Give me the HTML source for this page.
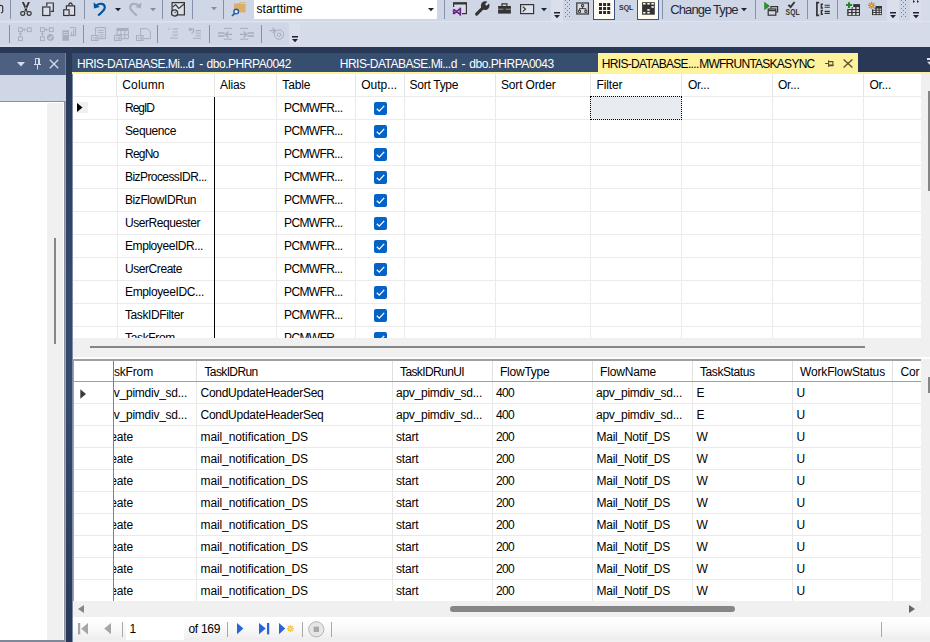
<!DOCTYPE html>
<html><head><meta charset="utf-8"><title>Query Designer</title>
<style>
html,body{margin:0;padding:0;}
body{width:930px;height:642px;overflow:hidden;background:#D6DBE9;position:relative;font-family:"Liberation Sans",sans-serif;}
#r{position:absolute;left:0;top:0;width:930px;height:642px;overflow:hidden;}
#r div,#r span,#r svg{position:absolute;}
.t{white-space:nowrap;line-height:16px;height:16px;}
.clip{overflow:hidden;}
</style></head><body><div id="r">
<div style="left:0px;top:0px;width:930px;height:47px;background:#D6DBE9;"></div>
<div style="left:0px;top:0px;width:551px;height:21px;background:#CFD6E5;"></div>
<div style="left:551px;top:0px;width:12px;height:21px;background:#DBDFEC;"></div>
<div style="left:563px;top:0px;width:324px;height:21px;background:#CFD6E5;"></div>
<div style="left:887px;top:0px;width:12px;height:21px;background:#DBDFEC;"></div>
<div style="left:899px;top:0px;width:11px;height:21px;background:#CFD6E5;"></div>
<div style="left:910px;top:0px;width:11px;height:21px;background:#DBDFEC;"></div>
<div style="left:0px;top:23px;width:289px;height:22px;background:#CFD6E5;"></div>
<div style="left:0px;top:21px;width:930px;height:1px;background:#DFE3EE;"></div>
<div style="left:289px;top:23px;width:11px;height:22px;background:#DBDFEC;"></div>
<div style="left:0px;top:47px;width:930px;height:27px;background:#293955;"></div>
<div style="left:72px;top:53px;width:526px;height:19px;background:#364E6F;"></div>
<div style="left:598px;top:53px;width:260px;height:19px;background:#FFF29D;"></div>
<div style="left:72px;top:72px;width:858px;height:2px;background:#FFF29D;"></div>
<div style="left:0px;top:53px;width:66px;height:22px;background:#4D6082;"></div>
<div style="left:65px;top:53px;width:1px;height:22px;background:#6F80A3;"></div>
<div style="left:0px;top:75px;width:66px;height:26px;background:#CFD6E5;"></div>
<div style="left:0px;top:101px;width:65px;height:541px;background:#FFFFFF;"></div>
<div style="left:0px;top:101px;width:65px;height:1px;background:#8A90A0;"></div>
<div style="left:47px;top:103px;width:16px;height:537px;background:#F0F0F0;"></div>
<div style="left:54px;top:238px;width:2px;height:106px;background:#868686;"></div>
<div style="left:64px;top:101px;width:1px;height:541px;background:#8A90A0;"></div>
<div style="left:65px;top:101px;width:1px;height:541px;background:#97A3C2;"></div>
<div style="left:0px;top:640px;width:65px;height:2px;background:#7F8899;"></div>
<div style="left:66px;top:47px;width:6px;height:595px;background:linear-gradient(#293955 0%,#35496A 40%,#35496A 60%,#293955 100%)"></div>
<div style="left:72px;top:74px;width:1px;height:568px;background:#7C8DB0;"></div>
<div style="left:73px;top:74px;width:848px;height:264px;background:#FFFFFF;"></div>
<div style="left:921px;top:74px;width:9px;height:264px;background:#F0F0F0;"></div>
<div style="left:928px;top:91px;width:2px;height:100px;background:#868686;"></div>
<div style="left:73px;top:96px;width:848px;height:1px;background:#EBEBEB;"></div>
<div style="left:73px;top:119px;width:848px;height:1px;background:#EBEBEB;"></div>
<div style="left:73px;top:142px;width:848px;height:1px;background:#EBEBEB;"></div>
<div style="left:73px;top:165px;width:848px;height:1px;background:#EBEBEB;"></div>
<div style="left:73px;top:188px;width:848px;height:1px;background:#EBEBEB;"></div>
<div style="left:73px;top:211px;width:848px;height:1px;background:#EBEBEB;"></div>
<div style="left:73px;top:234px;width:848px;height:1px;background:#EBEBEB;"></div>
<div style="left:73px;top:257px;width:848px;height:1px;background:#EBEBEB;"></div>
<div style="left:73px;top:280px;width:848px;height:1px;background:#EBEBEB;"></div>
<div style="left:73px;top:303px;width:848px;height:1px;background:#EBEBEB;"></div>
<div style="left:73px;top:326px;width:848px;height:1px;background:#EBEBEB;"></div>
<div style="left:116px;top:74px;width:1px;height:22px;background:#E4E4E4;"></div>
<div style="left:117px;top:97px;width:1px;height:241px;background:#EBEBEB;"></div>
<div style="left:214px;top:74px;width:1px;height:22px;background:#E4E4E4;"></div>
<div style="left:214px;top:97px;width:1px;height:241px;background:#EBEBEB;"></div>
<div style="left:276px;top:74px;width:1px;height:22px;background:#E4E4E4;"></div>
<div style="left:276px;top:97px;width:1px;height:241px;background:#EBEBEB;"></div>
<div style="left:355px;top:74px;width:1px;height:22px;background:#E4E4E4;"></div>
<div style="left:355px;top:97px;width:1px;height:241px;background:#EBEBEB;"></div>
<div style="left:404px;top:74px;width:1px;height:22px;background:#E4E4E4;"></div>
<div style="left:404px;top:97px;width:1px;height:241px;background:#EBEBEB;"></div>
<div style="left:495px;top:74px;width:1px;height:22px;background:#E4E4E4;"></div>
<div style="left:495px;top:97px;width:1px;height:241px;background:#EBEBEB;"></div>
<div style="left:590px;top:74px;width:1px;height:22px;background:#E4E4E4;"></div>
<div style="left:590px;top:97px;width:1px;height:241px;background:#EBEBEB;"></div>
<div style="left:681px;top:74px;width:1px;height:22px;background:#E4E4E4;"></div>
<div style="left:681px;top:97px;width:1px;height:241px;background:#EBEBEB;"></div>
<div style="left:772px;top:74px;width:1px;height:22px;background:#E4E4E4;"></div>
<div style="left:772px;top:97px;width:1px;height:241px;background:#EBEBEB;"></div>
<div style="left:863px;top:74px;width:1px;height:22px;background:#E4E4E4;"></div>
<div style="left:863px;top:97px;width:1px;height:241px;background:#EBEBEB;"></div>
<div style="left:214px;top:97px;width:1px;height:241px;background:#000000;"></div>
<div style="left:590px;top:96px;width:92px;height:24px;background:#E8ECF0;box-sizing:border-box;border:1px dotted #000;"></div>
<div style="left:77px;top:102px;width:11px;height:11px;background:#F0F0F0;"></div>
<svg style="left:77px;top:103px" width="6" height="9" viewBox="0 0 6 9"><path d="M0 0 L5.5 4.5 L0 9 Z" fill="#000"/></svg>
<span class="t" style="left:122.2px;top:76.84px;font-size:12px;color:#000;letter-spacing:0.192px;">Column</span>
<span class="t" style="left:220px;top:76.84px;font-size:12px;color:#000;letter-spacing:-0.102px;">Alias</span>
<span class="t" style="left:282.3px;top:76.84px;font-size:12px;color:#000;letter-spacing:-0.138px;">Table</span>
<span class="t" style="left:361.2px;top:76.84px;font-size:12px;color:#000;letter-spacing:-0.003px;">Outp...</span>
<span class="t" style="left:409.6px;top:76.84px;font-size:12px;color:#000;letter-spacing:-0.293px;">Sort Type</span>
<span class="t" style="left:501px;top:76.84px;font-size:12px;color:#000;letter-spacing:-0.152px;">Sort Order</span>
<span class="t" style="left:596.5px;top:76.84px;font-size:12px;color:#000;letter-spacing:-0.111px;">Filter</span>
<span class="t" style="left:688px;top:76.84px;font-size:12px;color:#000;letter-spacing:-0.234px;">Or...</span>
<span class="t" style="left:778px;top:76.84px;font-size:12px;color:#000;letter-spacing:-0.234px;">Or...</span>
<span class="t" style="left:869.5px;top:76.84px;font-size:12px;color:#000;letter-spacing:-0.234px;">Or...</span>
<div class="clip" style="left:73px;top:96px;width:848px;height:242px;">
<span class="t" style="left:52px;top:3.84px;font-size:12px;color:#000;letter-spacing:-1.003px;">RegID</span>
<span class="t" style="left:211px;top:3.84px;font-size:12px;color:#000;letter-spacing:-0.61px;">PCMWFR...</span>
<svg style="left:301px;top:6px" width="13" height="13" viewBox="0 0 13 13"><rect x="0" y="0" width="13" height="13" rx="2" fill="#0463C4"/><path d="M2.8 6.7 L5.3 9.1 L10.2 3.9" stroke="#fff" stroke-width="1.3" fill="none"/></svg>
<span class="t" style="left:52px;top:26.84px;font-size:12px;color:#000;letter-spacing:-0.381px;">Sequence</span>
<span class="t" style="left:211px;top:26.84px;font-size:12px;color:#000;letter-spacing:-0.61px;">PCMWFR...</span>
<svg style="left:301px;top:29px" width="13" height="13" viewBox="0 0 13 13"><rect x="0" y="0" width="13" height="13" rx="2" fill="#0463C4"/><path d="M2.8 6.7 L5.3 9.1 L10.2 3.9" stroke="#fff" stroke-width="1.3" fill="none"/></svg>
<span class="t" style="left:52px;top:49.84px;font-size:12px;color:#000;letter-spacing:-0.771px;">RegNo</span>
<span class="t" style="left:211px;top:49.84px;font-size:12px;color:#000;letter-spacing:-0.61px;">PCMWFR...</span>
<svg style="left:301px;top:52px" width="13" height="13" viewBox="0 0 13 13"><rect x="0" y="0" width="13" height="13" rx="2" fill="#0463C4"/><path d="M2.8 6.7 L5.3 9.1 L10.2 3.9" stroke="#fff" stroke-width="1.3" fill="none"/></svg>
<span class="t" style="left:52px;top:72.84px;font-size:12px;color:#000;letter-spacing:-0.574px;">BizProcessIDR...</span>
<span class="t" style="left:211px;top:72.84px;font-size:12px;color:#000;letter-spacing:-0.61px;">PCMWFR...</span>
<svg style="left:301px;top:75px" width="13" height="13" viewBox="0 0 13 13"><rect x="0" y="0" width="13" height="13" rx="2" fill="#0463C4"/><path d="M2.8 6.7 L5.3 9.1 L10.2 3.9" stroke="#fff" stroke-width="1.3" fill="none"/></svg>
<span class="t" style="left:52px;top:95.84px;font-size:12px;color:#000;letter-spacing:-0.418px;">BizFlowIDRun</span>
<span class="t" style="left:211px;top:95.84px;font-size:12px;color:#000;letter-spacing:-0.61px;">PCMWFR...</span>
<svg style="left:301px;top:98px" width="13" height="13" viewBox="0 0 13 13"><rect x="0" y="0" width="13" height="13" rx="2" fill="#0463C4"/><path d="M2.8 6.7 L5.3 9.1 L10.2 3.9" stroke="#fff" stroke-width="1.3" fill="none"/></svg>
<span class="t" style="left:52px;top:118.84px;font-size:12px;color:#000;letter-spacing:-0.439px;">UserRequester</span>
<span class="t" style="left:211px;top:118.84px;font-size:12px;color:#000;letter-spacing:-0.61px;">PCMWFR...</span>
<svg style="left:301px;top:121px" width="13" height="13" viewBox="0 0 13 13"><rect x="0" y="0" width="13" height="13" rx="2" fill="#0463C4"/><path d="M2.8 6.7 L5.3 9.1 L10.2 3.9" stroke="#fff" stroke-width="1.3" fill="none"/></svg>
<span class="t" style="left:52px;top:141.84px;font-size:12px;color:#000;letter-spacing:-0.431px;">EmployeeIDR...</span>
<span class="t" style="left:211px;top:141.84px;font-size:12px;color:#000;letter-spacing:-0.61px;">PCMWFR...</span>
<svg style="left:301px;top:144px" width="13" height="13" viewBox="0 0 13 13"><rect x="0" y="0" width="13" height="13" rx="2" fill="#0463C4"/><path d="M2.8 6.7 L5.3 9.1 L10.2 3.9" stroke="#fff" stroke-width="1.3" fill="none"/></svg>
<span class="t" style="left:52px;top:164.84px;font-size:12px;color:#000;letter-spacing:-0.435px;">UserCreate</span>
<span class="t" style="left:211px;top:164.84px;font-size:12px;color:#000;letter-spacing:-0.61px;">PCMWFR...</span>
<svg style="left:301px;top:167px" width="13" height="13" viewBox="0 0 13 13"><rect x="0" y="0" width="13" height="13" rx="2" fill="#0463C4"/><path d="M2.8 6.7 L5.3 9.1 L10.2 3.9" stroke="#fff" stroke-width="1.3" fill="none"/></svg>
<span class="t" style="left:52px;top:187.84px;font-size:12px;color:#000;letter-spacing:-0.359px;">EmployeeIDC...</span>
<span class="t" style="left:211px;top:187.84px;font-size:12px;color:#000;letter-spacing:-0.61px;">PCMWFR...</span>
<svg style="left:301px;top:190px" width="13" height="13" viewBox="0 0 13 13"><rect x="0" y="0" width="13" height="13" rx="2" fill="#0463C4"/><path d="M2.8 6.7 L5.3 9.1 L10.2 3.9" stroke="#fff" stroke-width="1.3" fill="none"/></svg>
<span class="t" style="left:52px;top:210.84px;font-size:12px;color:#000;letter-spacing:-0.403px;">TaskIDFilter</span>
<span class="t" style="left:211px;top:210.84px;font-size:12px;color:#000;letter-spacing:-0.61px;">PCMWFR...</span>
<svg style="left:301px;top:213px" width="13" height="13" viewBox="0 0 13 13"><rect x="0" y="0" width="13" height="13" rx="2" fill="#0463C4"/><path d="M2.8 6.7 L5.3 9.1 L10.2 3.9" stroke="#fff" stroke-width="1.3" fill="none"/></svg>
<span class="t" style="left:52px;top:233.84px;font-size:12px;color:#000;letter-spacing:-0.334px;">TaskFrom</span>
<span class="t" style="left:211px;top:233.84px;font-size:12px;color:#000;letter-spacing:-0.61px;">PCMWFR...</span>
<svg style="left:301px;top:236px" width="13" height="13" viewBox="0 0 13 13"><rect x="0" y="0" width="13" height="13" rx="2" fill="#0463C4"/><path d="M2.8 6.7 L5.3 9.1 L10.2 3.9" stroke="#fff" stroke-width="1.3" fill="none"/></svg>
</div>
<div style="left:73px;top:338px;width:857px;height:19px;background:#F0F0F0;"></div>
<div style="left:90px;top:346px;width:775px;height:2px;background:#868686;"></div>
<div style="left:73px;top:357px;width:857px;height:2px;background:#FCFCFC;"></div>
<div style="left:73px;top:359px;width:848px;height:242px;background:#FFFFFF;"></div>
<div style="left:921px;top:359px;width:9px;height:242px;background:#F0F0F0;"></div>
<div style="left:73px;top:359px;width:848px;height:2px;background:#A0A0A0;"></div>
<div style="left:73px;top:359px;width:1px;height:242px;background:#A0A0A0;"></div>
<div style="left:928px;top:377px;width:2px;height:16px;background:#868686;"></div>
<div style="left:73px;top:381px;width:848px;height:1px;background:#A0A0A0;"></div>
<div style="left:74px;top:403px;width:847px;height:1px;background:#EAEAEA;"></div>
<div style="left:74px;top:425px;width:847px;height:1px;background:#EAEAEA;"></div>
<div style="left:74px;top:447px;width:847px;height:1px;background:#EAEAEA;"></div>
<div style="left:74px;top:469px;width:847px;height:1px;background:#EAEAEA;"></div>
<div style="left:74px;top:491px;width:847px;height:1px;background:#EAEAEA;"></div>
<div style="left:74px;top:513px;width:847px;height:1px;background:#EAEAEA;"></div>
<div style="left:74px;top:535px;width:847px;height:1px;background:#EAEAEA;"></div>
<div style="left:74px;top:557px;width:847px;height:1px;background:#EAEAEA;"></div>
<div style="left:74px;top:579px;width:847px;height:1px;background:#EAEAEA;"></div>
<div style="left:74px;top:601px;width:847px;height:1px;background:#EAEAEA;"></div>
<div style="left:196px;top:361px;width:1px;height:20px;background:#E0E0E0;"></div>
<div style="left:196px;top:382px;width:1px;height:219px;background:#E8E8E8;"></div>
<div style="left:392px;top:361px;width:1px;height:20px;background:#E0E0E0;"></div>
<div style="left:392px;top:382px;width:1px;height:219px;background:#E8E8E8;"></div>
<div style="left:492px;top:361px;width:1px;height:20px;background:#E0E0E0;"></div>
<div style="left:492px;top:382px;width:1px;height:219px;background:#E8E8E8;"></div>
<div style="left:592px;top:361px;width:1px;height:20px;background:#E0E0E0;"></div>
<div style="left:592px;top:382px;width:1px;height:219px;background:#E8E8E8;"></div>
<div style="left:692px;top:361px;width:1px;height:20px;background:#E0E0E0;"></div>
<div style="left:692px;top:382px;width:1px;height:219px;background:#E8E8E8;"></div>
<div style="left:792px;top:361px;width:1px;height:20px;background:#E0E0E0;"></div>
<div style="left:792px;top:382px;width:1px;height:219px;background:#E8E8E8;"></div>
<div style="left:892px;top:361px;width:1px;height:20px;background:#E0E0E0;"></div>
<div style="left:892px;top:382px;width:1px;height:219px;background:#E8E8E8;"></div>
<div style="left:113px;top:361px;width:1px;height:240px;background:#808080;"></div>
<span class="t" style="left:204.5px;top:363.84px;font-size:12px;color:#000;letter-spacing:-0.632px;">TaskIDRun</span>
<span class="t" style="left:400px;top:363.84px;font-size:12px;color:#000;letter-spacing:-0.608px;">TaskIDRunUI</span>
<span class="t" style="left:500px;top:363.84px;font-size:12px;color:#000;letter-spacing:-0.232px;">FlowType</span>
<span class="t" style="left:600px;top:363.84px;font-size:12px;color:#000;letter-spacing:-0.168px;">FlowName</span>
<span class="t" style="left:700px;top:363.84px;font-size:12px;color:#000;letter-spacing:-0.419px;">TaskStatus</span>
<span class="t" style="left:800px;top:363.84px;font-size:12px;color:#000;letter-spacing:-0.153px;">WorkFlowStatus</span>
<span class="t" style="left:900.5px;top:363.84px;font-size:12px;color:#000;letter-spacing:-0.112px;">Cor</span>
<div class="clip" style="left:114px;top:361px;width:82px;height:240px;">
<span class="t" style="left:-12.5px;top:2.84px;font-size:12px;color:#000;letter-spacing:-0.146px;">TaskFrom</span>
<span class="t" style="left:-13px;top:23.84px;font-size:12px;color:#000;letter-spacing:-0.253px;">apv_pimdiv_sd...</span>
<span class="t" style="left:-13px;top:45.84px;font-size:12px;color:#000;letter-spacing:-0.253px;">apv_pimdiv_sd...</span>
<span class="t" style="left:-13.5px;top:67.84px;font-size:12px;color:#000;letter-spacing:-0.142px;">create</span>
<span class="t" style="left:-13.5px;top:89.84px;font-size:12px;color:#000;letter-spacing:-0.142px;">create</span>
<span class="t" style="left:-13.5px;top:111.84px;font-size:12px;color:#000;letter-spacing:-0.142px;">create</span>
<span class="t" style="left:-13.5px;top:133.84px;font-size:12px;color:#000;letter-spacing:-0.142px;">create</span>
<span class="t" style="left:-13.5px;top:155.84px;font-size:12px;color:#000;letter-spacing:-0.142px;">create</span>
<span class="t" style="left:-13.5px;top:177.84px;font-size:12px;color:#000;letter-spacing:-0.142px;">create</span>
<span class="t" style="left:-13.5px;top:199.84px;font-size:12px;color:#000;letter-spacing:-0.142px;">create</span>
<span class="t" style="left:-13.5px;top:221.84px;font-size:12px;color:#000;letter-spacing:-0.142px;">create</span>
</div>
<div class="clip" style="left:74px;top:382px;width:847px;height:219px;">
<span class="t" style="left:126.5px;top:2.84px;font-size:12px;color:#000;letter-spacing:-0.268px;">CondUpdateHeaderSeq</span>
<span class="t" style="left:322px;top:2.84px;font-size:12px;color:#000;letter-spacing:-0.253px;">apv_pimdiv_sd...</span>
<span class="t" style="left:422px;top:2.84px;font-size:12px;color:#000;letter-spacing:-0.674px;">400</span>
<span class="t" style="left:522px;top:2.84px;font-size:12px;color:#000;letter-spacing:-0.253px;">apv_pimdiv_sd...</span>
<span class="t" style="left:622.5px;top:2.84px;font-size:12px;color:#000;letter-spacing:-2.504px;">E</span>
<span class="t" style="left:722.5px;top:2.84px;font-size:12px;color:#000;letter-spacing:-1.166px;">U</span>
<span class="t" style="left:126.5px;top:24.84px;font-size:12px;color:#000;letter-spacing:-0.268px;">CondUpdateHeaderSeq</span>
<span class="t" style="left:322px;top:24.84px;font-size:12px;color:#000;letter-spacing:-0.253px;">apv_pimdiv_sd...</span>
<span class="t" style="left:422px;top:24.84px;font-size:12px;color:#000;letter-spacing:-0.674px;">400</span>
<span class="t" style="left:522px;top:24.84px;font-size:12px;color:#000;letter-spacing:-0.253px;">apv_pimdiv_sd...</span>
<span class="t" style="left:622.5px;top:24.84px;font-size:12px;color:#000;letter-spacing:-2.504px;">E</span>
<span class="t" style="left:722.5px;top:24.84px;font-size:12px;color:#000;letter-spacing:-1.166px;">U</span>
<span class="t" style="left:126.5px;top:46.84px;font-size:12px;color:#000;letter-spacing:-0.095px;">mail_notification_DS</span>
<span class="t" style="left:322px;top:46.84px;font-size:12px;color:#000;letter-spacing:-0.168px;">start</span>
<span class="t" style="left:422px;top:46.84px;font-size:12px;color:#000;letter-spacing:-0.674px;">200</span>
<span class="t" style="left:522.5px;top:46.84px;font-size:12px;color:#000;letter-spacing:-0.246px;">Mail_Notif_DS</span>
<span class="t" style="left:622.5px;top:46.84px;font-size:12px;color:#000;letter-spacing:-0.826px;">W</span>
<span class="t" style="left:722.5px;top:46.84px;font-size:12px;color:#000;letter-spacing:-1.166px;">U</span>
<span class="t" style="left:126.5px;top:68.84px;font-size:12px;color:#000;letter-spacing:-0.095px;">mail_notification_DS</span>
<span class="t" style="left:322px;top:68.84px;font-size:12px;color:#000;letter-spacing:-0.168px;">start</span>
<span class="t" style="left:422px;top:68.84px;font-size:12px;color:#000;letter-spacing:-0.674px;">200</span>
<span class="t" style="left:522.5px;top:68.84px;font-size:12px;color:#000;letter-spacing:-0.246px;">Mail_Notif_DS</span>
<span class="t" style="left:622.5px;top:68.84px;font-size:12px;color:#000;letter-spacing:-0.826px;">W</span>
<span class="t" style="left:722.5px;top:68.84px;font-size:12px;color:#000;letter-spacing:-1.166px;">U</span>
<span class="t" style="left:126.5px;top:90.84px;font-size:12px;color:#000;letter-spacing:-0.095px;">mail_notification_DS</span>
<span class="t" style="left:322px;top:90.84px;font-size:12px;color:#000;letter-spacing:-0.168px;">start</span>
<span class="t" style="left:422px;top:90.84px;font-size:12px;color:#000;letter-spacing:-0.674px;">200</span>
<span class="t" style="left:522.5px;top:90.84px;font-size:12px;color:#000;letter-spacing:-0.246px;">Mail_Notif_DS</span>
<span class="t" style="left:622.5px;top:90.84px;font-size:12px;color:#000;letter-spacing:-0.826px;">W</span>
<span class="t" style="left:722.5px;top:90.84px;font-size:12px;color:#000;letter-spacing:-1.166px;">U</span>
<span class="t" style="left:126.5px;top:112.84px;font-size:12px;color:#000;letter-spacing:-0.095px;">mail_notification_DS</span>
<span class="t" style="left:322px;top:112.84px;font-size:12px;color:#000;letter-spacing:-0.168px;">start</span>
<span class="t" style="left:422px;top:112.84px;font-size:12px;color:#000;letter-spacing:-0.674px;">200</span>
<span class="t" style="left:522.5px;top:112.84px;font-size:12px;color:#000;letter-spacing:-0.246px;">Mail_Notif_DS</span>
<span class="t" style="left:622.5px;top:112.84px;font-size:12px;color:#000;letter-spacing:-0.826px;">W</span>
<span class="t" style="left:722.5px;top:112.84px;font-size:12px;color:#000;letter-spacing:-1.166px;">U</span>
<span class="t" style="left:126.5px;top:134.84px;font-size:12px;color:#000;letter-spacing:-0.095px;">mail_notification_DS</span>
<span class="t" style="left:322px;top:134.84px;font-size:12px;color:#000;letter-spacing:-0.168px;">start</span>
<span class="t" style="left:422px;top:134.84px;font-size:12px;color:#000;letter-spacing:-0.674px;">200</span>
<span class="t" style="left:522.5px;top:134.84px;font-size:12px;color:#000;letter-spacing:-0.246px;">Mail_Notif_DS</span>
<span class="t" style="left:622.5px;top:134.84px;font-size:12px;color:#000;letter-spacing:-0.826px;">W</span>
<span class="t" style="left:722.5px;top:134.84px;font-size:12px;color:#000;letter-spacing:-1.166px;">U</span>
<span class="t" style="left:126.5px;top:156.84px;font-size:12px;color:#000;letter-spacing:-0.095px;">mail_notification_DS</span>
<span class="t" style="left:322px;top:156.84px;font-size:12px;color:#000;letter-spacing:-0.168px;">start</span>
<span class="t" style="left:422px;top:156.84px;font-size:12px;color:#000;letter-spacing:-0.674px;">200</span>
<span class="t" style="left:522.5px;top:156.84px;font-size:12px;color:#000;letter-spacing:-0.246px;">Mail_Notif_DS</span>
<span class="t" style="left:622.5px;top:156.84px;font-size:12px;color:#000;letter-spacing:-0.826px;">W</span>
<span class="t" style="left:722.5px;top:156.84px;font-size:12px;color:#000;letter-spacing:-1.166px;">U</span>
<span class="t" style="left:126.5px;top:178.84px;font-size:12px;color:#000;letter-spacing:-0.095px;">mail_notification_DS</span>
<span class="t" style="left:322px;top:178.84px;font-size:12px;color:#000;letter-spacing:-0.168px;">start</span>
<span class="t" style="left:422px;top:178.84px;font-size:12px;color:#000;letter-spacing:-0.674px;">200</span>
<span class="t" style="left:522.5px;top:178.84px;font-size:12px;color:#000;letter-spacing:-0.246px;">Mail_Notif_DS</span>
<span class="t" style="left:622.5px;top:178.84px;font-size:12px;color:#000;letter-spacing:-0.826px;">W</span>
<span class="t" style="left:722.5px;top:178.84px;font-size:12px;color:#000;letter-spacing:-1.166px;">U</span>
<span class="t" style="left:126.5px;top:200.84px;font-size:12px;color:#000;letter-spacing:-0.095px;">mail_notification_DS</span>
<span class="t" style="left:322px;top:200.84px;font-size:12px;color:#000;letter-spacing:-0.168px;">start</span>
<span class="t" style="left:422px;top:200.84px;font-size:12px;color:#000;letter-spacing:-0.674px;">200</span>
<span class="t" style="left:522.5px;top:200.84px;font-size:12px;color:#000;letter-spacing:-0.246px;">Mail_Notif_DS</span>
<span class="t" style="left:622.5px;top:200.84px;font-size:12px;color:#000;letter-spacing:-0.826px;">W</span>
<span class="t" style="left:722.5px;top:200.84px;font-size:12px;color:#000;letter-spacing:-1.166px;">U</span>
</div>
<svg style="left:80px;top:389px" width="7" height="10" viewBox="0 0 7 10"><path d="M0.3 0.3 L6 5 L0.3 9.7 Z" fill="#3C3C3C"/></svg>
<div style="left:73px;top:601px;width:857px;height:16px;background:#F0F0F0;"></div>
<div style="left:450px;top:606px;width:285px;height:6px;border-radius:3px;background:#868686"></div>
<svg style="left:78px;top:605px" width="6" height="8" viewBox="0 0 6 8"><path d="M6 0 L0 4 L6 8 Z" fill="#868686"/></svg>
<svg style="left:909px;top:605px" width="6" height="8" viewBox="0 0 6 8"><path d="M0 0 L6 4 L0 8 Z" fill="#666666"/></svg>
<div style="left:73px;top:617px;width:857px;height:23px;background:linear-gradient(#FFFFFF,#F9F9F9 50%,#EDEDED)"></div>
<div style="left:73px;top:640px;width:857px;height:2px;background:#F0F0F0;"></div>
<div style="left:126px;top:618px;width:58px;height:22px;background:#FFFFFF;"></div>
<div style="left:122px;top:622px;width:1px;height:15px;background:#A8A8A8;"></div>
<div style="left:227px;top:622px;width:1px;height:15px;background:#A8A8A8;"></div>
<div style="left:302px;top:622px;width:1px;height:15px;background:#A8A8A8;"></div>
<div style="left:331px;top:622px;width:1px;height:15px;background:#A8A8A8;"></div>
<div style="left:881px;top:622px;width:1px;height:15px;background:#A8A8A8;"></div>
<span class="t" style="left:129.5px;top:620.84px;font-size:12px;color:#000;letter-spacing:-1.674px;">1</span>
<span class="t" style="left:188.5px;top:620.84px;font-size:12px;color:#000;letter-spacing:-0.311px;">of 169</span>
<span class="t" style="left:77.0px;top:55.84px;font-size:12px;color:#FFFFFF;letter-spacing:-0.529px;">HRIS-DATABASE.Mi...d</span>
<span class="t" style="left:199.3px;top:55.84px;font-size:12px;color:#FFFFFF;letter-spacing:0.504px;">-</span>
<span class="t" style="left:206.6px;top:55.84px;font-size:12px;color:#FFFFFF;letter-spacing:-0.47px;">dbo.PHRPA0042</span>
<span class="t" style="left:339.8px;top:55.84px;font-size:12px;color:#FFFFFF;letter-spacing:-0.529px;">HRIS-DATABASE.Mi...d</span>
<span class="t" style="left:461.4px;top:55.84px;font-size:12px;color:#FFFFFF;letter-spacing:0.504px;">-</span>
<span class="t" style="left:469.3px;top:55.84px;font-size:12px;color:#FFFFFF;letter-spacing:-0.47px;">dbo.PHRPA0043</span>
<span class="t" style="left:601.8px;top:55.84px;font-size:12px;color:#000000;letter-spacing:-0.673px;">HRIS-DATABASE....</span>
<span class="t" style="left:699.2px;top:55.84px;font-size:12px;color:#000000;letter-spacing:-0.743px;">MWFRUNTASKASYNC</span>
<svg style="left:825px;top:60px" width="9" height="8" viewBox="0 0 9 8"><path d="M0 3.5 H3.5 M3.6 0.3 V7 M3.6 1.6 H7.9 V5.6 H3.6" stroke="#5C5130" stroke-width="1.1" fill="none"/><path d="M3.6 5.2 H8.4" stroke="#5C5130" stroke-width="1.5"/></svg>
<svg style="left:843px;top:58.6px" width="10" height="9" viewBox="0 0 10 9"><path d="M0.6 0.5 L9.4 8.5 M9.4 0.5 L0.6 8.5" stroke="#5C5130" stroke-width="1.35" fill="none"/></svg>
<svg style="left:922px;top:58px" width="8" height="8" viewBox="0 0 8 8"><path d="M5 0 H8 V2 H5 Z M5 3.8 H8 V7 Z" fill="#DDE2EE"/></svg>
<svg style="left:17px;top:62px" width="9" height="5" viewBox="0 0 9 5"><path d="M0 0 H8 L4 4.5 Z" fill="#D6DBE9"/></svg>
<svg style="left:33px;top:58px" width="9" height="12" viewBox="0 0 9 12"><path d="M2.5 0.5 H6.5 V6.5 H2.5 Z M5.5 0.5 V6.5 M1 6.5 H8 M4.5 6.5 V11.5" stroke="#D6DBE9" stroke-width="1" fill="none"/></svg>
<svg style="left:49px;top:59px" width="10" height="10" viewBox="0 0 10 10"><path d="M0.8 0.8 L9.2 9.2 M9.2 0.8 L0.8 9.2" stroke="#D6DBE9" stroke-width="1.3" fill="none"/></svg>
<svg style="left:0px;top:0px" width="4" height="16" viewBox="0 0 4 16"><path d="M0 5.4 C1.6 5.5 2.7 6 2.7 6.8 V11.4 C2.7 12.1 2.2 12.6 1 13" stroke="#343434" stroke-width="1.2" fill="#DDDCEA"/></svg>
<div style="left:10px;top:0px;width:1px;height:19px;background:#8591A8;"></div>
<svg style="left:18px;top:1px" width="16" height="16" viewBox="0 0 16 16"><path d="M3.9 0.9 H5.9 L8.8 7.4 L7.2 8.6 Z M11.9 0.9 H9.9 L7 7.4 L8.6 8.6 Z" fill="#343434"/><path d="M7.6 7.6 L6.9 10.6 M8.2 7.6 L8.9 10.6" stroke="#343434" stroke-width="1.2"/><rect x="2.7" y="10.6" width="4.1" height="3.7" rx="1.7" stroke="#343434" stroke-width="1.25" fill="none"/><rect x="9.1" y="10.6" width="4.1" height="3.7" rx="1.7" stroke="#343434" stroke-width="1.25" fill="none"/></svg>
<svg style="left:41px;top:1px" width="16" height="16" viewBox="0 0 16 16"><path d="M5.8 5 V2 H12.3 V10.4 H9.6" stroke="#343434" stroke-width="1.2" fill="#DCDFEA"/><rect x="1.7" y="6" width="7.2" height="8.5" stroke="#343434" stroke-width="1.2" fill="#DCDFEA"/></svg>
<svg style="left:62px;top:1px" width="16" height="16" viewBox="0 0 16 16"><path d="M6.4 4.8 L7.2 2.8 Q8.5 0.8 9.8 2.8 L10.6 4.8" stroke="#343434" stroke-width="1.2" fill="none"/><path d="M4.4 8 V4.8 H12.6 V14.4 H8" stroke="#343434" stroke-width="1.2" fill="#DCDFEA"/><rect x="1.7" y="8.8" width="5.4" height="5.7" stroke="#343434" stroke-width="1.2" fill="#DCDFEA"/></svg>
<div style="left:84px;top:0px;width:1px;height:19px;background:#8591A8;"></div>
<svg style="left:92px;top:1px" width="16" height="16" viewBox="0 0 16 16"><path d="M4.4 4.6 C7.4 1.8 12.8 2.2 12.8 6.4 C12.8 8.4 11.6 9.6 6.2 14.6" stroke="#00539C" stroke-width="2.1" fill="none"/><path d="M1.6 1.4 L2 7.6 L7.8 6 Z" fill="#00539C"/></svg>
<svg style="left:114.5px;top:8px" width="7" height="4" viewBox="0 0 7 4"><path d="M0 0 H6 L3 3.2 Z" fill="#1B2433"/></svg>
<svg style="left:127px;top:1px" width="16" height="16" viewBox="0 0 16 16"><path d="M11.6 4.6 C8.6 1.8 3.2 2.2 3.2 6.4 C3.2 8.4 4.4 9.6 9.8 14.6" stroke="#A7AEBF" stroke-width="2.1" fill="none"/><path d="M14.4 1.4 L14 7.6 L8.2 6 Z" fill="#A7AEBF"/></svg>
<svg style="left:150px;top:8px" width="7" height="4" viewBox="0 0 7 4"><path d="M0 0 H6 L3 3.2 Z" fill="#8C8C8C"/></svg>
<div style="left:162px;top:0px;width:1px;height:19px;background:#8591A8;"></div>
<svg style="left:170px;top:1px" width="16" height="16" viewBox="0 0 16 16"><rect x="2.1" y="1.6" width="12.3" height="12.3" stroke="#343434" stroke-width="1.2" fill="#DDE0EA"/><path d="M2.6 6.2 L5.6 3.6 L8.8 7.4 L14 3" stroke="#343434" stroke-width="1.1" fill="none"/><circle cx="4.6" cy="12" r="3.1" stroke="#343434" stroke-width="1.2" fill="#CFD6E5"/><path d="M4.6 12 L6.2 10.4" stroke="#343434" stroke-width="1"/></svg>
<div style="left:192px;top:0px;width:1px;height:19px;background:#8591A8;"></div>
<svg style="left:211px;top:7px" width="7" height="4" viewBox="0 0 7 4"><path d="M0 0 H6 L3 3.2 Z" fill="#8C8C8C"/></svg>
<div style="left:223px;top:0px;width:1px;height:19px;background:#8591A8;"></div>
<svg style="left:231px;top:1px" width="16" height="16" viewBox="0 0 16 16"><path d="M3 2.6 H8 L9.2 1.2 H14.6 V11.6 H3 Z" fill="#DCAE6B"/><path d="M9.4 2.4 H14.6" stroke="#F0CF9C" stroke-width="1"/><circle cx="5.2" cy="10.6" r="2.3" stroke="#1F5FA8" stroke-width="1.4" fill="#E8EEF8"/><path d="M3.6 12.4 L1 15" stroke="#1F5FA8" stroke-width="1.7"/></svg>
<div style="left:254px;top:0px;width:183px;height:19px;background:#FFFFFF;"></div>
<span class="t" style="left:256.6px;top:0.84px;font-size:12px;color:#000;letter-spacing:-0.001px;">starttime</span>
<svg style="left:428px;top:8px" width="7" height="4" viewBox="0 0 7 4"><path d="M0 0 H6 L3 3.2 Z" fill="#1B2433"/></svg>
<div style="left:444px;top:0px;width:1px;height:19px;background:#8591A8;"></div>
<svg style="left:452px;top:1px" width="16" height="16" viewBox="0 0 16 16"><path d="M1.6 8 V2 H14.4 V12.6 H10" stroke="#343434" stroke-width="1.2" fill="#D9DAE7"/><rect x="1" y="1.3" width="14" height="2.2" fill="#343434"/><rect x="0" y="6" width="9.8" height="10" fill="#CFD6E5"/><rect x="2" y="6" width="8" height="1" fill="#D9DAE7"/><path d="M1.7 8.4 L7.8 13.2 M1.7 13 L7.8 7.9 M1.6 8.2 V13.2" stroke="#6A2182" stroke-width="1.5" fill="none"/><path d="M8.3 6.6 V14.6" stroke="#6A2182" stroke-width="1.7"/></svg>
<svg style="left:474px;top:1px" width="16" height="16" viewBox="0 0 16 16"><path d="M2.6 13.2 L9.6 6.2" stroke="#343434" stroke-width="3.1" stroke-linecap="round"/><circle cx="11.2" cy="4.6" r="4.3" fill="#343434"/><path d="M11.8 4 L15.4 0.4" stroke="#CFD6E5" stroke-width="2.4"/></svg>
<svg style="left:497px;top:1px" width="16" height="16" viewBox="0 0 16 16"><path d="M5 5 V2.8 H9.9 V5" stroke="#343434" stroke-width="1.2" fill="none"/><rect x="1.1" y="5" width="12.8" height="7.6" fill="#343434"/><rect x="1.1" y="7.8" width="12.8" height="0.7" fill="#B9BECB"/><rect x="6.4" y="7.2" width="2.2" height="2.2" fill="#343434"/></svg>
<svg style="left:519px;top:1px" width="16" height="16" viewBox="0 0 16 16"><rect x="1.6" y="3.6" width="13" height="9" stroke="#343434" stroke-width="1.2" fill="#DDE0EA"/><path d="M3.8 5.6 L6.4 8.1 L3.8 10.6" stroke="#343434" stroke-width="1.2" fill="none"/></svg>
<svg style="left:541px;top:8px" width="7" height="4" viewBox="0 0 7 4"><path d="M0 0 H6 L3 3.2 Z" fill="#1B2433"/></svg>
<svg style="left:554px;top:11.6px" width="7" height="7" viewBox="0 0 7 7"><path d="M0 0 H6 V1.4 H0 Z M0 3 H6 L3 6.3 Z" fill="#1B2433"/></svg>
<svg style="left:564.8px;top:0px" width="6" height="19" viewBox="0 0 6 19"><rect x="0" y="0" width="1" height="1" fill="#6F7E9C"/><rect x="4" y="0" width="1" height="1" fill="#6F7E9C"/><rect x="2" y="2" width="1" height="1" fill="#6F7E9C"/><rect x="0" y="4" width="1" height="1" fill="#6F7E9C"/><rect x="4" y="4" width="1" height="1" fill="#6F7E9C"/><rect x="2" y="6" width="1" height="1" fill="#6F7E9C"/><rect x="0" y="8" width="1" height="1" fill="#6F7E9C"/><rect x="4" y="8" width="1" height="1" fill="#6F7E9C"/><rect x="2" y="10" width="1" height="1" fill="#6F7E9C"/><rect x="0" y="12" width="1" height="1" fill="#6F7E9C"/><rect x="4" y="12" width="1" height="1" fill="#6F7E9C"/><rect x="2" y="14" width="1" height="1" fill="#6F7E9C"/><rect x="0" y="16" width="1" height="1" fill="#6F7E9C"/><rect x="4" y="16" width="1" height="1" fill="#6F7E9C"/></svg>
<svg style="left:575px;top:1px" width="16" height="16" viewBox="0 0 16 16"><rect x="1.8" y="2" width="11.6" height="11" stroke="#343434" stroke-width="1.2" fill="#D9DAE7"/><path d="M6.5 3.6 H8.6 V5.6 H6.5 Z M7.55 5.6 V7.6 M4.5 9.3 V7.6 H10.8 V9.3 M3.5 9.3 H5.5 V11.4 H3.5 Z M9.8 9.3 H11.8 V11.4 H9.8 Z" stroke="#343434" stroke-width="0.95" fill="none"/></svg>
<div style="left:593px;top:0px;width:22px;height:20px;background:#FFFCF4;box-sizing:border-box;border:1px solid #39557F;border-top:none;"></div>
<svg style="left:599px;top:3px" width="12" height="12" viewBox="0 0 12 12"><rect x="0.0" y="0" width="3" height="3" fill="#2A2A2A"/><rect x="0.0" y="4" width="3" height="3" fill="#2A2A2A"/><rect x="0.0" y="8" width="3" height="3" fill="#2A2A2A"/><rect x="4.1" y="0" width="3" height="3" fill="#2A2A2A"/><rect x="4.1" y="4" width="3" height="3" fill="#2A2A2A"/><rect x="4.1" y="8" width="3" height="3" fill="#2A2A2A"/><rect x="8.2" y="0" width="3" height="3" fill="#2A2A2A"/><rect x="8.2" y="4" width="3" height="3" fill="#2A2A2A"/><rect x="8.2" y="8" width="3" height="3" fill="#2A2A2A"/></svg>
<span class="t" style="left:618.6px;top:0.2px;font-size:8px;font-weight:bold;color:#333;letter-spacing:0;transform:scaleX(0.87);transform-origin:0 0;">SQL</span>
<div style="left:637px;top:0px;width:22px;height:20px;background:#FFFCF4;box-sizing:border-box;border:1px solid #39557F;border-top:none;"></div>
<svg style="left:641px;top:1px" width="16" height="16" viewBox="0 0 16 16"><rect x="1.1" y="1.2" width="12.7" height="12.5" fill="#333"/><rect x="2.1" y="2.0" width="2.4" height="1.6" fill="#FFFCF4"/><rect x="6.3" y="2.0" width="2.4" height="1.6" fill="#FFFCF4"/><rect x="10.4" y="2.0" width="2.4" height="1.6" fill="#FFFCF4"/><rect x="10.4" y="5.2" width="2.4" height="1.6" fill="#FFFCF4"/><rect x="6.3" y="8.1" width="2.4" height="1.6" fill="#FFFCF4"/><rect x="2.1" y="10.9" width="2.4" height="1.6" fill="#FFFCF4"/><rect x="6.3" y="10.9" width="2.4" height="1.6" fill="#FFFCF4"/></svg>
<div style="left:662px;top:0px;width:1px;height:19px;background:#8591A8;"></div>
<span class="t" style="left:670.2px;top:1.50px;font-size:13px;color:#1B293E;letter-spacing:-0.873px;">Change Type</span>
<svg style="left:741px;top:8px" width="7" height="4" viewBox="0 0 7 4"><path d="M0 0 H6 L3 3.2 Z" fill="#1B2433"/></svg>
<div style="left:755px;top:0px;width:1px;height:19px;background:#8591A8;"></div>
<svg style="left:763px;top:1px" width="16" height="16" viewBox="0 0 16 16"><path d="M1.2 0.8 L7 5 L1.2 9.2 Z" fill="#2E8B2E"/><path d="M8 7.4 V5.6 H14.6 V11 H13" stroke="#343434" stroke-width="1.2" fill="none"/><rect x="5.2" y="8" width="7.6" height="6.2" stroke="#343434" stroke-width="1.2" fill="#CFD6E5"/><path d="M5.2 9.6 H12.8" stroke="#343434" stroke-width="1.2"/></svg>
<svg style="left:785px;top:1px" width="16" height="16" viewBox="0 0 16 16"><path d="M3.4 3.8 L5.6 6 L9.6 1" stroke="#343434" stroke-width="1.9" fill="none"/><text x="0.6" y="14.4" font-family="Liberation Sans, sans-serif" font-size="8.6" font-weight="bold" textLength="14" lengthAdjust="spacingAndGlyphs" fill="#343434">SQL</text></svg>
<div style="left:807px;top:0px;width:1px;height:19px;background:#8591A8;"></div>
<svg style="left:815px;top:1px" width="16" height="16" viewBox="0 0 16 16"><path d="M4.2 1.6 H1.9 V14.4 H4.2" stroke="#343434" stroke-width="1.7" fill="none"/><path d="M8 3.2 H6.4 V7 H8 M8 9.4 H6.4 V13.2 H8" stroke="#343434" stroke-width="1.5" fill="none"/><path d="M9.6 4.3 H14.8 M9.6 6.3 H14.8 M9.6 10.4 H14.8 M9.6 12.4 H14.8" stroke="#343434" stroke-width="1.1"/></svg>
<div style="left:837px;top:0px;width:1px;height:19px;background:#8591A8;"></div>
<svg style="left:845px;top:1px" width="16" height="16" viewBox="0 0 16 16"><rect x="2.2" y="3.1" width="12.8" height="11.7" fill="#333"/><rect x="3.6" y="6.2" width="2.6" height="1.7" fill="#EEF0F6"/><rect x="3.6" y="9.2" width="2.6" height="1.7" fill="#EEF0F6"/><rect x="3.6" y="12.1" width="2.6" height="1.8" fill="#EEF0F6"/><rect x="7.6" y="6.2" width="2.6" height="1.7" fill="#EEF0F6"/><rect x="7.6" y="9.2" width="2.6" height="1.7" fill="#EEF0F6"/><rect x="7.6" y="12.1" width="2.6" height="1.8" fill="#EEF0F6"/><rect x="11.5" y="6.2" width="2.4" height="1.7" fill="#EEF0F6"/><rect x="11.5" y="9.2" width="2.4" height="1.7" fill="#EEF0F6"/><rect x="11.5" y="12.1" width="2.4" height="1.8" fill="#EEF0F6"/><rect x="0" y="0" width="8.2" height="6" fill="#CFD6E5"/><rect x="0" y="0" width="6.6" height="8" fill="#CFD6E5"/><path d="M4 1.2 V7 M1 4.1 H7" stroke="#1F8A1F" stroke-width="2"/></svg>
<svg style="left:867px;top:1px" width="16" height="16" viewBox="0 0 16 16"><rect x="5" y="5" width="10" height="9.1" fill="#333"/><rect x="6.2" y="7.6" width="2.2" height="1.1" fill="#EEF0F6"/><rect x="6.2" y="9.7" width="2.2" height="1.2" fill="#EEF0F6"/><rect x="6.2" y="11.9" width="2.2" height="1.3" fill="#EEF0F6"/><rect x="9.7" y="7.6" width="1.9" height="1.1" fill="#EEF0F6"/><rect x="9.7" y="9.7" width="1.9" height="1.2" fill="#EEF0F6"/><rect x="9.7" y="11.9" width="1.9" height="1.3" fill="#EEF0F6"/><rect x="12.6" y="7.6" width="1.6" height="1.1" fill="#EEF0F6"/><rect x="12.6" y="9.7" width="1.6" height="1.2" fill="#EEF0F6"/><rect x="12.6" y="11.9" width="1.6" height="1.3" fill="#EEF0F6"/><circle cx="4.65" cy="4.4" r="4.2" fill="#CFD6E5"/><path d="M5.85 4.40 L8.35 4.40 M5.50 5.25 L7.27 7.02 M4.65 5.60 L4.65 8.10 M3.80 5.25 L2.03 7.02 M3.45 4.40 L0.95 4.40 M3.80 3.55 L2.03 1.78 M4.65 3.20 L4.65 0.70 M5.50 3.55 L7.27 1.78 " stroke="#D6831A" stroke-width="1.1"/><circle cx="4.65" cy="4.4" r="1.3" fill="none" stroke="#D6831A" stroke-width="0.9"/></svg>
<svg style="left:890px;top:11.6px" width="7" height="7" viewBox="0 0 7 7"><path d="M0 0 H6 V1.4 H0 Z M0 3 H6 L3 6.3 Z" fill="#1B2433"/></svg>
<svg style="left:900.8px;top:0px" width="6" height="19" viewBox="0 0 6 19"><rect x="0" y="0" width="1" height="1" fill="#6F7E9C"/><rect x="4" y="0" width="1" height="1" fill="#6F7E9C"/><rect x="2" y="2" width="1" height="1" fill="#6F7E9C"/><rect x="0" y="4" width="1" height="1" fill="#6F7E9C"/><rect x="4" y="4" width="1" height="1" fill="#6F7E9C"/><rect x="2" y="6" width="1" height="1" fill="#6F7E9C"/><rect x="0" y="8" width="1" height="1" fill="#6F7E9C"/><rect x="4" y="8" width="1" height="1" fill="#6F7E9C"/><rect x="2" y="10" width="1" height="1" fill="#6F7E9C"/><rect x="0" y="12" width="1" height="1" fill="#6F7E9C"/><rect x="4" y="12" width="1" height="1" fill="#6F7E9C"/><rect x="2" y="14" width="1" height="1" fill="#6F7E9C"/><rect x="0" y="16" width="1" height="1" fill="#6F7E9C"/><rect x="4" y="16" width="1" height="1" fill="#6F7E9C"/></svg>
<svg style="left:913px;top:11.6px" width="7" height="7" viewBox="0 0 7 7"><path d="M0 0 H6 V1.4 H0 Z M0 3 H6 L3 6.3 Z" fill="#1B2433"/></svg>
<svg style="left:913px;top:0.4px" width="7" height="4" viewBox="0 0 7 4"><path d="M0 0 L2 1.5 L0 3 Z M4 0 L6 1.5 L4 3 Z" fill="#1B2433"/></svg>
<div style="left:9px;top:25px;width:1px;height:18px;background:#8591A8;"></div>
<div style="left:83px;top:25px;width:1px;height:18px;background:#8591A8;"></div>
<div style="left:157px;top:25px;width:1px;height:18px;background:#8591A8;"></div>
<div style="left:209px;top:25px;width:1px;height:18px;background:#8591A8;"></div>
<div style="left:261px;top:25px;width:1px;height:18px;background:#8591A8;"></div>
<svg style="left:17px;top:26px" width="16" height="16" viewBox="0 0 16 16"><rect x="1.5" y="1.8" width="3.8" height="3.8" stroke="#A7AEBF" stroke-width="1" fill="none"/><rect x="10.4" y="1.8" width="3.8" height="3.8" stroke="#A7AEBF" stroke-width="1" fill="none"/><rect x="1.5" y="10.8" width="3.8" height="3.8" stroke="#A7AEBF" stroke-width="1" fill="none"/><path d="M6.4 3.7 H9.6 M3.4 6.6 V10 M7.8 2.4 L6.4 3.7 L7.8 5 M2 8.2 L3.4 6.8 L4.8 8.2" stroke="#A7AEBF" stroke-width="1" fill="none"/></svg>
<svg style="left:39px;top:26px" width="16" height="16" viewBox="0 0 16 16"><rect x="1.5" y="1.8" width="3.8" height="3.8" stroke="#A7AEBF" stroke-width="1" fill="none"/><rect x="10.4" y="1.8" width="3.8" height="3.8" stroke="#A7AEBF" stroke-width="1" fill="none"/><rect x="1.5" y="10.8" width="3.8" height="3.8" stroke="#A7AEBF" stroke-width="1" fill="none"/><path d="M6.4 3.7 H9.6 M3.4 6.6 V10 M7.8 2.4 L6.4 3.7 L7.8 5 M2 8.2 L3.4 6.8 L4.8 8.2" stroke="#A7AEBF" stroke-width="1" fill="none"/><circle cx="11.4" cy="11.4" r="3.4" fill="#A7AEBF"/><path d="M9.6 11.4 L11 12.8 L13.2 10" stroke="#CFD6E5" stroke-width="1.1" fill="none"/></svg>
<svg style="left:61px;top:26px" width="16" height="16" viewBox="0 0 16 16"><rect x="1.4" y="4.4" width="6.6" height="10.4" fill="#A7AEBF"/><path d="M2.4 6.6 H7 M2.4 8.6 H7" stroke="#CFD6E5" stroke-width="0.8"/><path d="M9 1.6 H14.6 V9.6 H9" stroke="#A7AEBF" stroke-width="1" fill="none"/><path d="M10.6 9 V5.6 M12.6 9 V3.6" stroke="#A7AEBF" stroke-width="1"/></svg>
<svg style="left:91px;top:26px" width="16" height="16" viewBox="0 0 16 16"><path d="M4.6 8.6 V1.6 H14.4 V12.6 H8" stroke="#A7AEBF" stroke-width="1" fill="none"/><path d="M7 4.4 H12.6 M7 6.6 H12.6 M8.6 8.8 H12.6 M8.6 10.8 H12.6" stroke="#A7AEBF" stroke-width="0.9"/><rect x="0.5" y="9.5" width="6.6" height="5" stroke="#A7AEBF" stroke-width="1" fill="#CFD6E5"/><path d="M2.4 11 V13.4 M4.4 11 H5.6 V13.4 H4.4 Z" stroke="#A7AEBF" stroke-width="0.8" fill="none"/></svg>
<svg style="left:114px;top:26px" width="16" height="16" viewBox="0 0 16 16"><rect x="2.6" y="2" width="12" height="3" fill="#A7AEBF"/><path d="M3 5 V12.6 H14.4 V5 M7 5 V12.6 M10.8 5 V12.6 M3 8.8 H14.4" stroke="#A7AEBF" stroke-width="1" fill="none"/><rect x="0.5" y="9.5" width="6.6" height="5" stroke="#A7AEBF" stroke-width="1" fill="#CFD6E5"/><path d="M2.4 11 V13.4 M4.4 11 H5.6 V13.4 H4.4 Z" stroke="#A7AEBF" stroke-width="0.8" fill="none"/></svg>
<svg style="left:136px;top:26px" width="16" height="16" viewBox="0 0 16 16"><path d="M4.6 8.6 V2.6 H10.6 L14.4 5.4 V12.6 H8" stroke="#A7AEBF" stroke-width="1" fill="none"/><rect x="0.5" y="9.5" width="6.6" height="5" stroke="#A7AEBF" stroke-width="1" fill="#CFD6E5"/><path d="M2.4 11 V13.4 M4.4 11 H5.6 V13.4 H4.4 Z" stroke="#A7AEBF" stroke-width="0.8" fill="none"/></svg>
<svg style="left:165px;top:26px" width="16" height="16" viewBox="0 0 16 16"><path d="M3 3 H4.8 M7.5 3 H13 M7.5 6 H13 M7.5 9 H13 M5 12 H13" stroke="#A7AEBF" stroke-width="1.1"/></svg>
<svg style="left:187px;top:26px" width="16" height="16" viewBox="0 0 16 16"><path d="M3.2 3.4 C5.6 1.6 8 3.6 5.8 6.2 L4.6 7.6 M2.4 1.8 L2.6 4.4 L5 4" stroke="#A7AEBF" stroke-width="1.2" fill="none"/><path d="M8.6 4.6 H14 M8.6 7.3 H14 M8.6 9.8 H14 M6 12.3 H14" stroke="#A7AEBF" stroke-width="1.1"/></svg>
<svg style="left:217px;top:26px" width="16" height="16" viewBox="0 0 16 16"><path d="M7 2.4 H15 M7 13.2 H15" stroke="#A7AEBF" stroke-width="1"/><path d="M1 6.9 H7.5 M1 10 H7.5" stroke="#A7AEBF" stroke-width="1.5"/><path d="M8.6 8.4 H15" stroke="#A7AEBF" stroke-width="1.4"/><path d="M11.4 5.4 L8.4 8.4 L11.4 11.4" stroke="#A7AEBF" stroke-width="1.4" fill="none"/></svg>
<svg style="left:239px;top:26px" width="16" height="16" viewBox="0 0 16 16"><path d="M1 2.4 H9 M1 13.2 H9" stroke="#A7AEBF" stroke-width="1"/><path d="M8.5 6.9 H15 M8.5 10 H15" stroke="#A7AEBF" stroke-width="1.5"/><path d="M1 8.4 H7.4" stroke="#A7AEBF" stroke-width="1.4"/><path d="M4.6 5.4 L7.6 8.4 L4.6 11.4" stroke="#A7AEBF" stroke-width="1.4" fill="none"/></svg>
<svg style="left:268px;top:26px" width="16" height="16" viewBox="0 0 16 16"><path d="M1.6 4.6 H7 M4.6 2 L7.2 4.6 L4.6 7.2" stroke="#A7AEBF" stroke-width="1.2" fill="none"/><circle cx="11" cy="8.6" r="4.7" stroke="#A7AEBF" stroke-width="1" fill="none"/><circle cx="10.8" cy="8.8" r="1.7" stroke="#A7AEBF" stroke-width="0.9" fill="none"/><path d="M12.6 7 V9.8 Q13.4 10.8 14.2 9.4" stroke="#A7AEBF" stroke-width="0.8" fill="none"/></svg>
<svg style="left:292px;top:35.7px" width="7" height="7" viewBox="0 0 7 7"><path d="M0 0 H6 V1.4 H0 Z M0 3 H6 L3 6.3 Z" fill="#1B2433"/></svg>
<svg style="left:78px;top:623px" width="10" height="12" viewBox="0 0 10 12"><rect x="0" y="0" width="2.2" height="11.4" fill="#A6A6A6"/><path d="M10 0 L3.2 5.7 L10 11.4 Z" fill="#A6A6A6"/></svg>
<svg style="left:103.5px;top:623px" width="7" height="12" viewBox="0 0 7 12"><path d="M7 0 L0.2 5.6 L7 11.2 Z" fill="#A6A6A6"/></svg>
<svg style="left:237px;top:622.8px" width="7" height="12" viewBox="0 0 7 12"><path d="M0 0 L6.4 5.6 L0 11.2 Z" fill="#2B63D9"/></svg>
<svg style="left:259px;top:623px" width="11" height="12" viewBox="0 0 11 12"><path d="M0 0 L6.8 5.6 L0 11.2 Z" fill="#2B63D9"/><rect x="8" y="0" width="2.2" height="11.4" fill="#2B63D9"/></svg>
<svg style="left:278.8px;top:622.8px" width="15" height="12" viewBox="0 0 15 12"><path d="M0 0 L6.2 5.6 L0 11.2 Z" fill="#2B63D9"/><path d="M11.4 2.2 V9 M8 5.6 H14.8 M9 3.2 L13.8 8 M13.8 3.2 L9 8" stroke="#F2C53D" stroke-width="1.4"/><rect x="10.6" y="4.8" width="1.6" height="1.6" fill="#FFF8D8"/></svg>
<svg style="left:307.5px;top:620.5px" width="17" height="17" viewBox="0 0 17 17"><circle cx="8.3" cy="8.3" r="7.6" fill="#E6E6E6" stroke="#B4B4B4" stroke-width="1"/><rect x="5.6" y="5.6" width="5.4" height="5.4" fill="#A8A8A8"/></svg>
</div></body></html>
